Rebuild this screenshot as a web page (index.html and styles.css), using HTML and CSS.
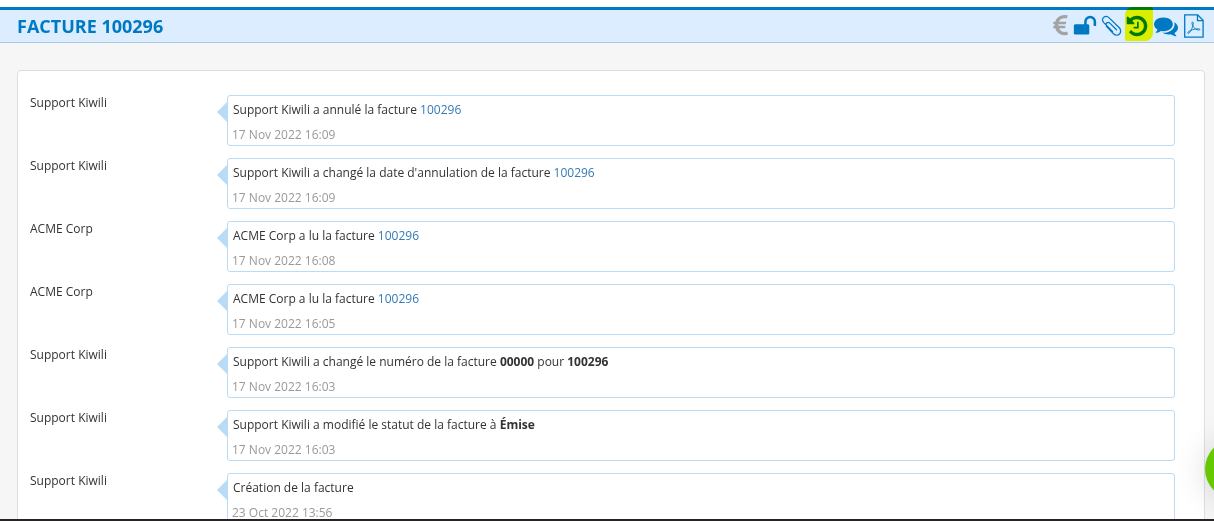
FILE: index.html
```html
<!DOCTYPE html>
<html lang="fr">
<head>
<meta charset="utf-8">
<title>Facture 100296</title>
<link rel="stylesheet" href="styles.css">
</head>
<body>
<header class="topbar">
  <h1 class="title">FACTURE 100296</h1>
  <nav class="tools" aria-label="Actions">
    <button class="tool tool-muted" aria-label="Paiement"><svg width="15" height="26" viewBox="360 0 1040 1792"><path d="M1360 1307l35 159q3 12-3 22.500t-17 14.500l-5 1q-4 2-10.500 3.500t-16 4.500-21.500 5.500-25.500 5-30 5-33.500 4.500-36.500 3-38.500 1q-234 0-409-130.500t-238-351.500h-95q-13 0-22.500-9.500t-9.500-22.500v-113q0-13 9.500-22.500t22.500-9.500h66q-2-57 1-105h-67q-14 0-23-9t-9-23v-114q0-14 9-23t23-9h98q67-210 243.500-338t400.500-128q102 0 194 23 11 3 20 15 6 11 3 24l-43 159q-3 13-14 19.500t-24 2.500l-4-1q-4-1-11.500-2.500l-17.500-3.500-22.500-3.500-26-3-29-2.500-29.500-1q-126 0-226 64t-150 176h468q16 0 25 12 10 12 7 26l-24 114q-5 26-32 26h-488q-3 37 0 105h459q15 0 25 12 9 12 6 27l-24 112q-2 11-11 18.500t-20 7.500h-387q48 117 149.500 185.500t228.500 68.500q18 0 36-1.500t33.500-3.500 29.500-4.500 24.500-5 18.500-4.500l12-3 5-2q13-5 26 2 12 7 15 21z"/></svg></button>
    <button class="tool" aria-label="Déverrouiller"><svg width="24" height="24" viewBox="0 0 1792 1792"><path d="M1728 576v256q0 26-19 45t-45 19h-64q-26 0-45-19t-19-45v-256q0-106-75-181t-181-75-181 75-75 181v192h96q40 0 68 28t28 68v576q0 40-28 68t-68 28h-960q-40 0-68-28t-28-68v-576q0-40 28-68t68-28h672v-192q0-185 131.500-316.500t316.500-131.500 316.500 131.500 131.500 316.500z"/></svg></button>
    <button class="tool" aria-label="Pièces jointes"><svg width="18" height="22" viewBox="0 0 18 22"><path class="line clip" d="M10.500 16.500L1.800 7.600C-.2 5.400.3 3.200 1.800 2.200s3.800-.9 5.600.9l9.900 9.600c1.800 1.900 1.700 4.800.2 6.300s-4.100 1.500-6-.3L4.900 11.700c-1.300-1.400-1-2.900-.2-3.700s2.200-.8 3.400.4l6.400 6.400"/></svg></button>
    <button class="tool marked" aria-label="Historique" aria-pressed="true"><svg width="24" height="24" viewBox="0 0 1792 1792"><path d="M1664 896q0 156-61 298t-164 245-245 164-298 61q-172 0-327-72.500t-264-204.500q-7-10-6.500-22.500t8.500-20.500l137-138q10-9 25-9 16 2 23 12 73 95 179 147t225 52q104 0 198.500-40.500t163.500-109.500 109.500-163.500 40.500-198.500-40.500-198.500-109.500-163.500-163.500-109.500-198.500-40.500q-98 0-188 35.500t-160 101.500l137 138q31 30 14 69-17 40-59 40h-448q-26 0-45-19t-19-45v-448q0-42 40-59 39-17 69 14l130 129q107-101 244.500-156.500t284.500-55.500q156 0 298 61t245 164 164 245 61 298zm-640-288v448q0 14-9 23t-23 9h-320q-14 0-23-9t-9-23v-64q0-14 9-23t23-9h224v-352q0-14 9-23t23-9h64q14 0 23 9t9 23z"/></svg></button>
    <button class="tool" aria-label="Commentaires"><svg width="24" height="24" viewBox="0 0 1792 1792"><path d="M1408 768q0 139-94 257t-256.500 186.500-353.500 68.500q-86 0-176-16-124 88-278 128-36 9-86 16h-3q-11 0-20.500-8t-11.500-21q-1-3-1-6.500t.5-6.500 2-6l2.500-5 3.500-5.500 4-5 4.500-5 4-4.500q5-6 23-25t26-29.500 22.500-29 25-38.500 20.500-44q-124-72-195-177t-71-224q0-139 94-257t256.500-186.500 353.500-68.500 353.500 68.500 256.500 186.500 94 257zm384 256q0 120-71 224.500t-195 176.500q10 24 20.500 44t25 38.500 22.500 29 26 29.500 23 25q1 1 4 4.500t4.500 5 4 5 3.500 5.500l2.500 5 2 6 .5 6.500-1 6.500q-3 14-13 22t-22 7q-50-7-86-16-154-40-278-128-90 16-176 16-271 0-472-132 58 4 88 4 161 0 309-45t264-129q125-92 192-212t67-254q0-77-23-152 129 71 204 178t75 230z"/></svg></button>
    <button class="tool" aria-label="PDF"><svg width="23" height="24" viewBox="0 0 23 24"><path class="line" d="M1.700.9h13l5.400 5.400v16.800H1.700zM14.500 1v5.600h5.500"/><path class="line thin" d="M9.300 8c1.100-.4 1.200 1.500.6 3.800-.8 2.800-2.800 6.600-4.200 7.500-.9.600-1.300-.3-.6-1.200 1.800-2 7-3.500 10.200-3.300 2.100.1 2.100 1.300.6 1.300-2.400 0-5.300-2.100-6.400-4.900-.6-1.500-.7-2.900-.2-3.200z"/></svg></button>
  </nav>
</header>
<main class="page">
  <section class="card">
    <article class="entry"><div class="author">Support Kiwili</div><div class="bubble"><p class="text">Support Kiwili a annulé la facture <a href="#">100296</a></p><time class="date">17 Nov 2022 16:09</time></div></article>
    <article class="entry"><div class="author">Support Kiwili</div><div class="bubble"><p class="text">Support Kiwili a changé la date d'annulation de la facture <a href="#">100296</a></p><time class="date">17 Nov 2022 16:09</time></div></article>
    <article class="entry"><div class="author">ACME Corp</div><div class="bubble"><p class="text">ACME Corp a lu la facture <a href="#">100296</a></p><time class="date">17 Nov 2022 16:08</time></div></article>
    <article class="entry"><div class="author">ACME Corp</div><div class="bubble"><p class="text">ACME Corp a lu la facture <a href="#">100296</a></p><time class="date">17 Nov 2022 16:05</time></div></article>
    <article class="entry"><div class="author">Support Kiwili</div><div class="bubble"><p class="text">Support Kiwili a changé le numéro de la facture <b>00000</b> pour <b>100296</b></p><time class="date">17 Nov 2022 16:03</time></div></article>
    <article class="entry"><div class="author">Support Kiwili</div><div class="bubble"><p class="text">Support Kiwili a modifié le statut de la facture à <b>Émise</b></p><time class="date">17 Nov 2022 16:03</time></div></article>
    <article class="entry"><div class="author">Support Kiwili</div><div class="bubble"><p class="text">Création de la facture</p><time class="date">23 Oct 2022 13:56</time></div></article>
  </section>
</main>
<div class="bottom-edge"></div>
<button class="chat" aria-label="Aide"></button>
</body>
</html>
```

FILE: styles.css
```css
* { box-sizing: border-box; }

body {
  margin: 0;
  height: 100vh;
  overflow: hidden;
  display: flex;
  flex-direction: column;
  background: #f6f6f6;
  color: #333;
  font: 12px/18px "Open Sans", sans-serif;
}

.topbar {
  flex: none;
  display: flex;
  align-items: center;
  justify-content: space-between;
  height: 36px;
  margin-top: 7px;
  padding: 0 8px 0 17px;
  background: #dbedfe;
  border-top: 3px solid #0079c4;
  border-bottom: 1px solid #a9cbe2;
  box-shadow: 0 -7px #fff;
}

.title {
  margin: 0;
  color: #0079c4;
  font-size: 18px;
  line-height: 24px;
  font-weight: 700;
}

.tools { display: flex; align-items: center; gap: 5px; }

.tool {
  position: relative;
  display: flex;
  padding: 0;
  border: 0;
  background: none;
  color: #0079c4;
}
.tool svg { fill: currentColor; overflow: visible; }
.tool-muted { color: #a3a3a3; }
.tool .line { fill: none; stroke: currentColor; stroke-width: 1.3; }
.tool .clip { stroke-linecap: round; }
.tool .thin { stroke-width: 0.9; }

/* highlighter over the active tool */
.marked::after {
  content: "";
  position: absolute;
  inset: -7px -4px -3px 0;
  border-radius: 8px 2px 8px 2px;
  background: #ff0;
  mix-blend-mode: multiply;
}

.page { flex: 1; min-height: 0; overflow: hidden; padding: 27px 9px 0 17px; }

.card {
  padding: 24px 29px 24px 12px;
  background: #fff;
  border: 1px solid #dedede;
  border-radius: 4px;
  display: flex;
  flex-direction: column;
  gap: 12px;
}

.entry { display: flex; }
.author { flex: 0 0 197px; line-height: 16px; }

.bubble {
  position: relative;
  flex: 1;
  padding: 5px 4px 1px;
  border: 1px solid #b9dbf5;
  border-radius: 3px;
}
.bubble::before {
  content: "";
  position: absolute;
  top: 6px;
  left: -11px;
  border: 10px solid transparent;
  border-left: 0;
  border-right-color: #b9dbf5;
}

.text { margin: 0 0 7px; padding-left: 1px; }
.text a { color: #337ab7; text-decoration: none; }
.date { display: block; color: #999; }

.bottom-edge { flex: none; position: relative; z-index: 2; height: 2px; background: #282325; }

.chat {
  position: fixed;
  right: -51px;
  bottom: 22px;
  width: 60px;
  height: 60px;
  border: 0;
  border-radius: 50%;
  background: #66c800;
  box-shadow: 0 2px 32px rgba(0, 0, 0, 0.15);
}
```
